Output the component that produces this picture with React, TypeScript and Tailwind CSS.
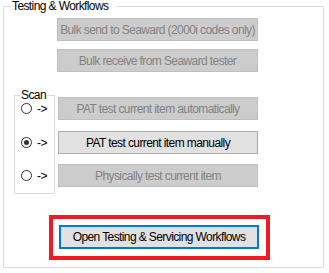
import React from "react";

function Btn({ label, disabled, w, className = "" }: { label: string; disabled?: boolean; w: string; className?: string }) {
  return (
    <div
      className={
        "h-[23px] flex items-center justify-center border whitespace-nowrap " +
        w +
        " " +
        (disabled ? "bg-[#cccccc] border-[#bfbfbf] text-[#838383]" : "bg-[#e1e1e1] border-[#adadad] text-black") +
        " " +
        className
      }
    >
      {label}
    </div>
  );
}

function Radio({ checked, className = "" }: { checked?: boolean; className?: string }) {
  return (
    <div className={"h-[23px] flex items-center pl-[6px] " + className}>
      <div className="w-[11px] h-[11px] rounded-full border border-[#333333] bg-white flex items-center justify-center">
        {checked ? <div className="w-[5px] h-[5px] rounded-full bg-[#333333]" /> : null}
      </div>
      <span className="ml-[5px] leading-[12px]">-&gt;</span>
    </div>
  );
}

export default function App() {
  return (
    <div className="w-[329px] h-[273px] bg-white overflow-hidden font-['Liberation_Sans',Arial,sans-serif] text-[12px] tracking-[-0.6px] text-black">
      <fieldset className="ml-[3px] w-[321px] h-[268px] border border-[#dcdcdc] m-0 p-0">
        <legend className="ml-[7px] pl-[1px] pr-[9px] leading-[12px]">Testing &amp; Workflows</legend>
        <div className="mt-[6px] ml-[53px] flex flex-col gap-[8px]">
          <Btn w="w-[201px]" disabled label="Bulk send to Seaward (2000i codes only)" />
          <Btn w="w-[201px]" disabled label="Bulk receive from Seaward tester" />
        </div>
        <div className="flex items-start">
          <fieldset className="mt-[17px] ml-[10px] w-[41px] h-[105px] border border-[#dcdcdc] m-0 p-0">
            <legend className="ml-[5px] px-[1px] leading-[12px]">Scan</legend>
            <div className="mt-[-4px] flex flex-col">
              <Radio />
              <Radio checked className="mt-[11px]" />
              <Radio className="mt-[10px]" />
            </div>
          </fieldset>
          <div className="mt-[25px] ml-[3px] flex flex-col">
            <Btn w="w-[200px]" disabled label="PAT test current item automatically" />
            <Btn w="w-[200px]" label="PAT test current item manually" className="mt-[11px]" />
            <Btn w="w-[200px]" disabled label="Physically test current item" className="mt-[10px]" />
          </div>
        </div>
        <div className="mt-[21px] ml-[45px] w-[221px] border-[4px] border-[#ed1c24] pl-[6px] pr-[7px] pt-[6px] pb-[7px]">
          <div className="w-[200px] h-[24px] border-2 border-[#0078d7] bg-[#e1e1e1] flex items-center justify-center whitespace-nowrap">
            Open Testing &amp; Servicing Workflows
          </div>
        </div>
      </fieldset>
    </div>
  );
}
